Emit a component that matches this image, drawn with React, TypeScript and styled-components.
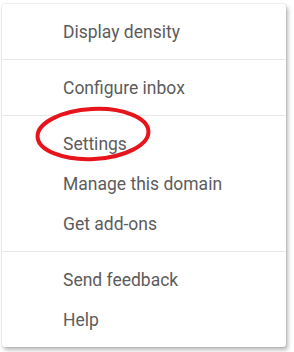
import React from 'react';
import styled, { createGlobalStyle } from 'styled-components';

const GlobalStyle = createGlobalStyle`
  html, body {
    margin: 0;
    padding: 0;
    background: #ffffff;
    font-family: Roboto, "Liberation Sans", Arial, sans-serif;
  }
`;

const Page = styled.div`
  width: 294px;
  height: 352px;
  padding: 4px 8px 0 2px;
  box-sizing: border-box;
`;

const Menu = styled.div`
  position: relative;
  width: 284px;
  background: #fff;
  border-radius: 3px;
  box-shadow: 0 0 0 1px rgba(0, 0, 0, 0.05), 2px 3px 4px rgba(0, 0, 0, 0.28);
`;

const Group = styled.div<{ $last?: boolean }>`
  padding: 7.5px 0;
  border-bottom: ${p => (p.$last ? 'none' : '1px solid #e8e8e8')};
`;

const Item = styled.div`
  height: 40px;
  display: flex;
  align-items: center;
  padding-left: 61px;
  font-size: 17.5px;
  color: #5c5c5c;
`;

const Highlight = styled.svg`
  position: absolute;
  left: 32px;
  top: 100px;
  overflow: visible;
  pointer-events: none;
`;

const groups = [
  ['Display density'],
  ['Configure inbox'],
  ['Settings', 'Manage this domain', 'Get add-ons'],
  ['Send feedback', 'Help'],
];

export default function App() {
  return (
    <>
      <GlobalStyle />
      <Page>
        <Menu>
          {groups.map((items, i) => (
            <Group key={i} $last={i === groups.length - 1}>
              {items.map(label => (
                <Item key={label}>{label}</Item>
              ))}
            </Group>
          ))}
          <Highlight width="120" height="60" viewBox="0 0 120 60">
            <ellipse cx="59" cy="30" rx="55.5" ry="25" fill="none" stroke="#e8141b" strokeWidth="4" transform="rotate(-3 59 30)" />
          </Highlight>
        </Menu>
      </Page>
    </>
  );
}
